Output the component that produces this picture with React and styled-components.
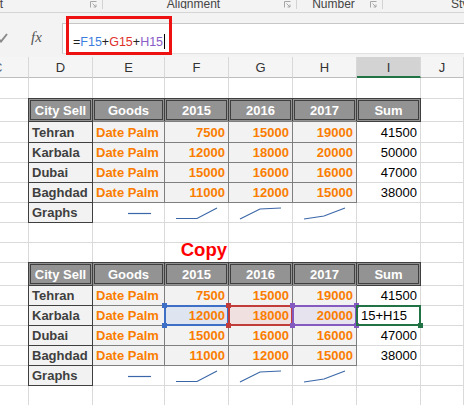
import React from 'react';
import styled, { createGlobalStyle, css } from 'styled-components';

const COLS = [29, 64, 72, 64, 64, 64, 64, 43];
const LETTERS = ['C', 'D', 'E', 'F', 'G', 'H', 'I', 'J'];
const ROWS = [21, 23, 21, 20, 20, 20, 20, 20, 20, 23, 20, 20, 20, 20, 20, 20];
const HEAD = ['City Sell', 'Goods', '2015', '2016', '2017', 'Sum'];

const cities = [
  ['Tehran', 7500, 15000, 19000, 41500],
  ['Karbala', 12000, 18000, 20000, 50000],
  ['Dubai', 15000, 16000, 16000, 47000],
  ['Baghdad', 11000, 12000, 15000, 38000],
];

const sparks = [
  [[35, 10.5], [58, 10.5]],
  [[11, 15.5], [32, 15.5], [52, 5]],
  [[11, 16], [31, 6], [52, 5]],
  [[11, 16], [31, 13], [52, 5]],
];

const ranges = [
  { color: '#3e6fc6', tint: '#dfe5f0' },
  { color: '#c23b3b', tint: '#f0e0e0' },
  { color: '#8459c0', tint: '#e6e2ee' },
];

const GlobalStyle = createGlobalStyle`
  html, body { margin: 0; padding: 0; background: #fff; }
  body { font-family: "Liberation Sans", Arial, sans-serif; }
  * { box-sizing: border-box; }
`;

const Screen = styled.div`
  width: 464px;
  height: 405px;
  overflow: hidden;
  background: #fff;
  display: flex;
  flex-direction: column;
`;

const Ribbon = styled.div`
  height: 13px;
  flex: none;
  display: flex;
  background: #f3f3f3;
  border-bottom: 1px solid #d5d5d5;
  overflow: hidden;
`;

const RibbonGroup = styled.div`
  width: ${(p) => p.$w}px;
  flex: none;
  height: 9px;
  display: flex;
  align-items: flex-start;
  padding-left: ${(p) => p.$pad || 0}px;
  border-right: ${(p) => (p.$last ? 'none' : '1px solid #d3d3d3')};
  overflow: hidden;
`;

const GroupLabel = styled.span`
  flex: 1;
  display: flex;
  justify-content: ${(p) => (p.$left ? 'flex-start' : 'center')};
  margin-top: -2px;
  margin-left: ${(p) => p.$shift || 0}px;
  font-size: 12px;
  line-height: 12px;
  color: #444;
  white-space: nowrap;
`;

const Launcher = styled.svg`
  flex: none;
  margin: 1px 5px 0 0;
`;

const FormulaBar = styled.div`
  height: 44px;
  flex: none;
  display: flex;
  background: #f3f3f3;
`;

const FxButtons = styled.div`
  width: 62px;
  flex: none;
  display: flex;
  align-items: center;
  padding-top: 5px;
  gap: 23px;
`;

const CheckIcon = styled.svg`
  margin-left: -3px;
`;

const FxLabel = styled.span`
  font-family: "Liberation Serif", "Times New Roman", serif;
  font-style: italic;
  font-size: 15px;
  color: #555;
`;

const FormulaBox = styled.div`
  flex: 1;
  margin-top: 10px;
  height: 31px;
  position: relative;
  display: flex;
  align-items: center;
  padding: 6px 0 0 10px;
  background: #fff;
  border-top: 1px solid #c6c6c6;
  border-left: 1px solid #c6c6c6;
  border-bottom: 1px solid #e0e0e0;
  font-size: 12.5px;
  color: #222;
`;

const Ref = styled.span`
  color: ${(p) => p.$color};
`;

const Caret = styled.span`
  width: 1px;
  height: 15px;
  margin-left: 1px;
  background: #000;
`;

const RedFrame = styled.div`
  position: absolute;
  left: 3px;
  top: -8px;
  width: 106px;
  height: 39px;
  border: 3px solid #ee1111;
`;

const gridCols = COLS.map((c) => `${c}px`).join(' ');

const ColumnHeads = styled.div`
  display: grid;
  grid-template-columns: ${gridCols};
  height: 21px;
  flex: none;
  background: #f5f5f5;
`;

const ColHead = styled.div`
  display: flex;
  align-items: center;
  justify-content: ${(p) => (p.$cut ? 'flex-start' : 'center')};
  font-size: 13px;
  color: #333;
  border-right: 1px solid #d8d8d8;
  border-bottom: 1px solid #bdbdbd;
  overflow: hidden;
  ${(p) =>
    p.$active &&
    css`
      background: #d3d3d3;
      border-bottom: 2px solid #217346;
      padding-top: 1px;
    `}
`;

const CutLetter = styled.span`
  margin-left: -7px;
  color: #5a6a80;
`;

const Sheet = styled.div`
  display: grid;
  grid-template-columns: ${gridCols};
  grid-template-rows: ${ROWS.map((r) => `${r}px`).join(' ')};
  flex: none;
`;

const kinds = {
  plain: css``,
  head: css`
    margin: -1px 0 0 -1px;
    border: 3px double #3f3f3f;
    background: #939393;
    color: #fff;
    font-weight: bold;
    align-items: center;
    justify-content: center;
    padding: 0;
  `,
  city: css`
    margin: -1px 0 0 -1px;
    border: 1px solid #3f3f3f;
    background: #f2f2f2;
    color: #3f3f3f;
    font-weight: bold;
    z-index: 1;
  `,
  calc: css`
    margin: -1px 0 0 -1px;
    border: 1px solid #7f7f7f;
    background: #f2f2f2;
    color: #fa7d00;
    font-weight: bold;
  `,
  copy: css`
    color: #f00;
    font-weight: bold;
    font-size: 18.5px;
    line-height: 20px;
    overflow: visible;
    padding-right: 1px;
  `,
  spark: css`
    padding: 0;
    align-items: stretch;
  `,
};

const Cell = styled.div`
  position: relative;
  display: flex;
  align-items: flex-end;
  justify-content: ${(p) => (p.$right ? 'flex-end' : 'flex-start')};
  padding: 0 3px 2px ${(p) => (p.$indent ? 4 : 3)}px;
  min-width: 0;
  border-right: 1px solid #dadada;
  border-bottom: 1px solid #dadada;
  background: #fff;
  font-size: 13px;
  line-height: 15px;
  color: #000;
  white-space: nowrap;
  ${(p) => kinds[p.$kind || 'plain']}
  ${(p) =>
    p.$tint &&
    css`
      background: ${p.$tint};
    `}
`;

const RangeBox = styled.span`
  position: absolute;
  inset: -1px;
  border: 2px solid ${(p) => p.$color};
  pointer-events: none;
  z-index: 2;
`;

const Handle = styled.span`
  position: absolute;
  width: 5px;
  height: 5px;
  background: ${(p) => p.$color};
  ${(p) => p.$v}: -4px;
  ${(p) => p.$h}: -4px;
`;

const SparkSvg = styled.svg`
  display: block;
  width: 100%;
  height: 100%;
`;

const Range = ({ color, all = true }) => (
  <RangeBox $color={color}>
    {all && <Handle $color={color} $v="top" $h="left" />}
    {all && <Handle $color={color} $v="bottom" $h="left" />}
    {all && <Handle $color={color} $v="top" $h="right" />}
    <Handle $color={color} $v="bottom" $h="right" />
  </RangeBox>
);

const LauncherIcon = () => (
  <Launcher width="7" height="7" viewBox="0 0 7 7">
    <path d="M0.5 6.5V0.5H6.5" fill="none" stroke="#a6a6a6" strokeWidth="1" />
    <path d="M2.5 2.5L6 6M6 3.5V6H3.5" fill="none" stroke="#a6a6a6" strokeWidth="1" />
  </Launcher>
);

const blank = (key) => <Cell key={key} />;

const tableRows = (t, editing) => {
  const out = [];
  out.push(blank(`${t}h0`));
  HEAD.forEach((h) =>
    out.push(
      <Cell key={`${t}h${h}`} $kind="head">
        {h}
      </Cell>
    )
  );
  out.push(blank(`${t}h9`));

  cities.forEach(([city, a, b, c, sum], i) => {
    const edit = editing && i === 1;
    out.push(blank(`${t}r${i}c`));
    out.push(
      <Cell key={`${t}r${i}d`} $kind="city">
        {city}
      </Cell>
    );
    out.push(
      <Cell key={`${t}r${i}e`} $kind="calc">
        Date Palm
      </Cell>
    );
    [a, b, c].forEach((v, j) =>
      out.push(
        <Cell key={`${t}r${i}n${j}`} $kind="calc" $right $tint={edit ? ranges[j].tint : undefined}>
          {v}
          {edit && <Range color={ranges[j].color} />}
        </Cell>
      )
    );
    out.push(
      edit ? (
        <Cell key={`${t}r${i}s`} $indent>
          15+H15
          <Range color="#217346" all={false} />
        </Cell>
      ) : (
        <Cell key={`${t}r${i}s`} $right>
          {sum}
        </Cell>
      )
    );
    out.push(blank(`${t}r${i}j`));
  });

  out.push(blank(`${t}gc`));
  out.push(
    <Cell key={`${t}gd`} $kind="city">
      Graphs
    </Cell>
  );
  sparks.forEach((pts, j) =>
    out.push(
      <Cell key={`${t}gs${j}`} $kind="spark">
        <SparkSvg>
          <polyline
            points={pts.map((p) => p.join(',')).join(' ')}
            fill="none"
            stroke="#3b67a8"
            strokeWidth="1.2"
          />
        </SparkSvg>
      </Cell>
    )
  );
  out.push(blank(`${t}gi`));
  out.push(blank(`${t}gj`));
  return out;
};

const emptyRow = (key) => COLS.map((_, i) => blank(`${key}${i}`));

export default function App() {
  return (
    <Screen>
      <GlobalStyle />
      <Ribbon>
        <RibbonGroup $w={103}>
          <GroupLabel $left $shift={-21}>Font</GroupLabel>
          <LauncherIcon />
        </RibbonGroup>
        <RibbonGroup $w={194}>
          <GroupLabel>Alignment</GroupLabel>
          <LauncherIcon />
        </RibbonGroup>
        <RibbonGroup $w={86}>
          <GroupLabel>Number</GroupLabel>
          <LauncherIcon />
        </RibbonGroup>
        <RibbonGroup $w={81} $pad={68} $last>
          <GroupLabel $left>Styles</GroupLabel>
        </RibbonGroup>
      </Ribbon>

      <FormulaBar>
        <FxButtons>
          <CheckIcon width="11" height="10" viewBox="0 0 11 10">
            <path d="M1 5.5L4 8.5L10 1" fill="none" stroke="#8a8a8a" strokeWidth="2" />
          </CheckIcon>
          <FxLabel>fx</FxLabel>
        </FxButtons>
        <FormulaBox>
          =<Ref $color="#3c7ee0">F15</Ref>+<Ref $color="#e0302a">G15</Ref>+
          <Ref $color="#8a5cc8">H15</Ref>
          <Caret />
          <RedFrame />
        </FormulaBox>
      </FormulaBar>

      <ColumnHeads>
        {LETTERS.map((l, i) => (
          <ColHead key={l} $cut={i === 0} $active={l === 'I'}>
            {i === 0 ? <CutLetter>{l}</CutLetter> : l}
          </ColHead>
        ))}
      </ColumnHeads>

      <Sheet>
        {emptyRow('top')}
        {tableRows('a', false)}
        {emptyRow('gap')}
        <Cell key="cp0" />
        <Cell key="cp1" />
        <Cell key="cp2" />
        <Cell key="cp3" $kind="copy" $right>
          Copy
        </Cell>
        <Cell key="cp4" />
        <Cell key="cp5" />
        <Cell key="cp6" />
        <Cell key="cp7" />
        {tableRows('b', true)}
        {emptyRow('end')}
      </Sheet>
    </Screen>
  );
}
